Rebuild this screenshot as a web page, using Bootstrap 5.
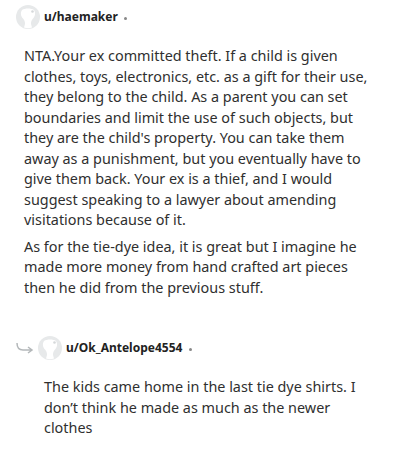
<!DOCTYPE html>
<html lang="en"><head><meta charset="utf-8">
<link href="https://cdn.jsdelivr.net/npm/bootstrap@5.3.0/dist/css/bootstrap.min.css" rel="stylesheet">
<style>
html,body{background:#fff;overflow:hidden}
body{font-family:"Noto Sans","Open Sans",sans-serif;color:#2f2f2f;font-size:14.4px;line-height:20.5px;width:400px;height:464px}
.thread-a{padding:5px 24px 0 16px}
.thread-b{padding:0 24px 0 16px;margin-top:38px}
.who{font-size:12px;font-weight:700;line-height:16px;color:#222}
.ava{width:24px;height:24px;flex:none}
.ava-box{margin-right:4px}
.dot{width:3px;height:3px;border-radius:50%;background:#888;margin-left:6px;margin-top:2px}
.dot-b{margin-left:7px}
.body-a{margin:17px 0 0 8px}
.body-a p{margin:0 0 6px}
.body-b{margin:17px 0 0 28px}
.arrow{width:18px;height:12px;margin-right:4px;flex:none}
</style></head><body>
<div class="thread-a">
<div class="d-flex align-items-center"><svg class="ava ava-box" viewBox="0 0 24 24"><circle cx="12" cy="12" r="12" fill="#e7e9ea"/><path d="M6 5c3-2 9-2 12 0 2 3 1 6.500-1 8.500-1.500 1.500-2 3-2 5.500l1 3.500c-2.500 1-5.500 1-8 0l1-3.500c0-2.500-.5-4-2-5.500-2-2-3-5.500-1-8.500z" fill="#fff"/><circle cx="16.500" cy="6.500" r="1.300" fill="#d5d8da"/></svg><span class="who">u/haemaker</span><span class="dot"></span></div>
<div class="body-a"><p>NTA.Your ex committed theft. If a child is given clothes, toys, electronics, etc. as a gift for their use, they belong to the child. As a parent you can set boundaries and limit the use of such objects, but they are the child's property. You can take them away as a punishment, but you eventually have to give them back. Your ex is a thief, and I would suggest speaking to a lawyer about amending visitations because of it.</p>
<p>As for the tie-dye idea, it is great but I imagine he made more money from hand crafted art pieces then he did from the previous stuff.</p></div>
</div>
<div class="thread-b">
<div class="d-flex align-items-center"><svg class="arrow" viewBox="0 0 18 12"><path d="M1 1c0 5 2 7 6 7h9M12 5l4 3-4 3" fill="none" stroke="#b4b8ba" stroke-width="1.500"/></svg><svg class="ava ava-box" viewBox="0 0 24 24"><circle cx="12" cy="12" r="12" fill="#e7e9ea"/><path d="M6 5c3-2 9-2 12 0 2 3 1 6.500-1 8.500-1.500 1.500-2 3-2 5.500l1 3.500c-2.500 1-5.500 1-8 0l1-3.500c0-2.500-.5-4-2-5.500-2-2-3-5.500-1-8.500z" fill="#fff"/><circle cx="16.500" cy="6.500" r="1.300" fill="#d5d8da"/></svg><span class="who">u/Ok_Antelope4554</span><span class="dot dot-b"></span></div>
<div class="body-b">The kids came home in the last tie dye shirts. I don’t think he made as much as the newer clothes</div>
</div>
<script src="https://cdn.jsdelivr.net/npm/bootstrap@5.3.0/dist/js/bootstrap.bundle.min.js"></script>
</body></html>
